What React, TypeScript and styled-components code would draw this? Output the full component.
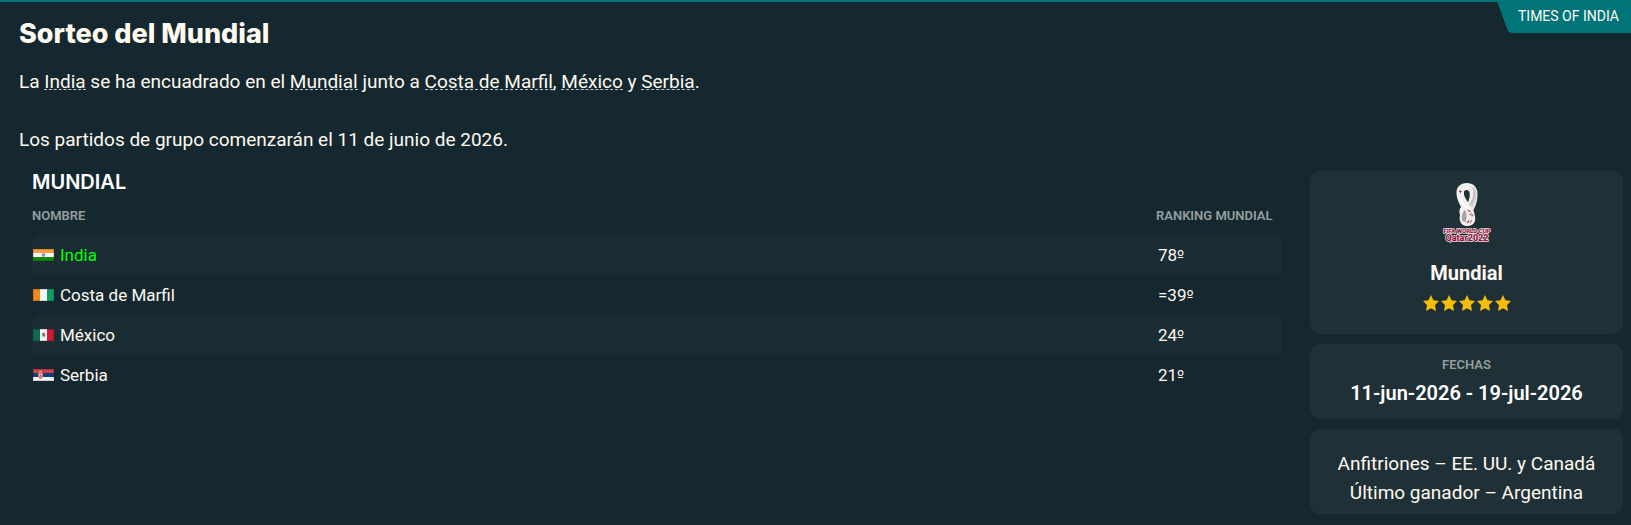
import React from "react";
import styled, { createGlobalStyle } from "styled-components";

const GlobalStyle = createGlobalStyle`
  * { box-sizing: border-box; }
  body {
    margin: 0;
    background: #15282f;
    color: #fff9f0;
    font-family: Roboto, "Liberation Sans", sans-serif;
  }
`;

const Page = styled.main`
  border-top: 2px solid #007478;
  padding-bottom: 10px;
`;

const Header = styled.header`
  display: flex;
  justify-content: space-between;
  align-items: flex-start;
  padding-left: 19px;
`;

const Title = styled.h1`
  margin: 15px 0 0;
  font: 800 27px/34px Inter, sans-serif;
`;

const SourceTag = styled.span`
  position: relative;
  isolation: isolate;
  overflow: hidden;
  padding: 0 12px 3px 22px;
  font-size: 14px;
  line-height: 28px;
  white-space: nowrap;
  &::before {
    content: "";
    position: absolute;
    z-index: -1;
    inset: 0 -20px 0 7px;
    background: #007478;
    border-bottom-left-radius: 4px;
    transform: skewX(20deg);
  }
`;

const Story = styled.section`
  padding: 16px 19px 0;
  font-size: 19px;
  line-height: 29px;
`;

const Paragraph = styled.p`
  margin: 0 0 29px;
  &:last-child { margin-bottom: 0; }
`;

const StoryLink = styled.a`
  color: inherit;
  text-decoration: none;
  border-bottom: 1px dashed #c4c8c5;
  display: inline-block;
  line-height: 15px;
`;

const Columns = styled.div`
  display: grid;
  grid-template-columns: minmax(0, 1fr) 313px;
  gap: 27px;
  padding: 17px 8px 0 32px;
  align-items: start;
`;

const GroupTitle = styled.h2`
  margin: 0;
  font: 600 20px/22px Inter, sans-serif;
  color: #fff;
`;

const GroupTable = styled.table`
  width: 100%;
  border-collapse: separate;
  border-spacing: 0;
  text-align: left;
`;

const HeadCell = styled.th<{ $wide?: boolean }>`
  width: ${(p) => (p.$wide ? "auto" : "127px")};
  height: 42px;
  padding: 4px 0 0;
  color: #959e9f;
  font-size: 13px;
  line-height: 16px;
  font-weight: 600;
  white-space: nowrap;
`;

const Row = styled.tr`
  & > td:first-child { border-radius: 8px 0 0 8px; }
  & > td:last-child { border-radius: 0 8px 8px 0; }
  &:nth-child(odd) > td { background: #1b2d34; }
`;

const Cell = styled.td`
  height: 40px;
  padding: 0 0 0 1px;
  font-size: 17px;
  line-height: 20px;
`;

const RankCell = styled(Cell)`
  padding-left: 2px;
`;

const Ordinal = styled.span`
  font-family: "DejaVu Sans", sans-serif;
  font-size: 15px;
`;

const Team = styled.a<{ $own?: boolean }>`
  display: inline-flex;
  align-items: center;
  gap: 6px;
  color: ${(p) => (p.$own ? "#00ff00" : "inherit")};
  text-decoration: none;
`;

const Sidebar = styled.aside`
  display: flex;
  flex-direction: column;
  gap: 10px;
  text-align: center;
`;

const Card = styled.section`
  display: flex;
  flex-direction: column;
  align-items: center;
  padding: 12px 8px 23px;
  border-radius: 10px;
  background: #1f3037;
`;

const DateCard = styled(Card)`
  padding: 13px 8px 12px;
`;

const NotesCard = styled(Card)`
  padding: 20px 8px 7px;
  font-size: 19px;
  line-height: 29px;
`;

const CardTitle = styled.h3`
  margin: 0;
  font-size: 20px;
  line-height: 28px;
  font-weight: 700;
`;

const DateRange = styled(CardTitle)`
  color: #fff;
  font-weight: 600;
`;

const Caption = styled.div`
  margin-bottom: 6px;
  color: #959e9f;
  font-size: 13px;
  line-height: 16px;
  font-weight: 600;
`;

const Stars = styled.div`
  display: flex;
  gap: 2px;
  margin-top: 8px;
`;

const LogoSvg = styled.svg`
  display: block;
  margin-bottom: 16px;
`;

const NoteLine = styled.p`
  margin: 0;
`;

type Country = "in" | "ci" | "mx" | "rs";

const stripes: Record<Country, { vertical: boolean; colors: string[] }> = {
  in: { vertical: false, colors: ["#ff9f3d", "#f7f7f7", "#138808"] },
  ci: { vertical: true, colors: ["#f58814", "#fafafa", "#109b63"] },
  mx: { vertical: true, colors: ["#106b4c", "#f7f7f7", "#cf1733"] },
  rs: { vertical: false, colors: ["#c8414b", "#12407a", "#f5f5f5"] },
};

function Flag({ country }: { country: Country }) {
  const { vertical, colors } = stripes[country];
  return (
    <svg width="21" height="12" viewBox="0 0 21 12" aria-hidden="true">
      {colors.map((c, i) =>
        vertical ? (
          <rect key={c} x={i * 7} width="7" height="12" fill={c} />
        ) : (
          <rect key={c} y={i * 4} width="21" height="4" fill={c} />
        )
      )}
      {country === "in" && (
        <circle cx="10.5" cy="6" r="1.4" fill="#a5a5dc" stroke="#5555b5" strokeWidth=".6" />
      )}
      {country === "mx" && (
        <>
          <path d="M9 4.6 10.4 3.6 12 4.5 12.2 6.5 11 7.4 9.4 6.6z" fill="#89704f" />
          <path d="M8.8 6.5Q10.5 9.2 12.4 6.5" fill="none" stroke="#819969" strokeWidth=".8" />
        </>
      )}
      {country === "rs" && (
        <>
          <path d="M5 3.3h5v4.2Q9.5 9.5 7.5 10 5.5 9.5 5 7.5z" fill="#cf6570" />
          <path d="M5.5 5.2 7 4.3 7.5 5 8 4.3 9.5 5.2 8.8 8.2 7.5 9 6.2 8.2z" fill="#e3b4b6" />
          <path d="M6.8 6h1.4v1.8H6.8z" fill="#c8414b" />
          <path d="M6 3.1V1.8l.8.5.7-.8.7.8.8-.5v1.3z" fill="#dfb175" />
        </>
      )}
      <rect x=".5" y=".5" width="20" height="11" fill="none" stroke="#000" strokeOpacity=".14" />
    </svg>
  );
}

function WorldCupLogo() {
  return (
    <LogoSvg width="54" height="60" viewBox="0 0 54 60" role="img" aria-label="FIFA World Cup Qatar 2022">
      <path
        fillRule="evenodd"
        d="M27 0C20 0 16 4 16.5 11c.3 5 2.6 9 4.5 13-2 2-1.8 5-1 8-1.3 6 1 10.5 6.8 11 6.2.2 9.2-3.5 8.2-9.5-.3-2-.9-4.5-1.6-6.5C36.5 22 37.7 16 37.5 10 37.2 4 33 0 27 0zM26 7c3 0 4.3 2.2 3.7 6.2-.3 2.1-.8 4.2-1.7 6.1-2-3.2-4.2-6-4.1-9C24 8 24.8 7 26 7z"
        fill="#f2f0ef"
      />
      <path d="M31 3c4 5 3 12-2 18l3 4c3.2-5 4.6-9 4.6-14C36.6 6 34 4 31 3z" fill="#d1cfcf" />
      <path d="M34 7c.7 6-1.2 11-3.8 15" fill="none" stroke="#b9b6b6" strokeWidth="1" />
      <path d="M25 27c2 4 2.2 8 .5 11.5-3 1-4-1.5-3.7-5 .2-3 1.3-5 3.2-6.5z" fill="#a7a3a3" />
      <path d="M21 17c2 7 8 8 12 13" fill="none" stroke="#fff" strokeWidth="2" />
      <path
        d="M18.8 8.5h3M20.3 7v3.4M27.5 26.5l2 2.5M29 27l2 2.2M29 30.5l3 3M31 30l2.2 3M26.5 38l1.5 2 1-3M30 40l2-3"
        fill="none"
        stroke="#bb4a67"
        strokeWidth="1"
      />
      <g
        fill="#8f0f38"
        stroke="#f6e9ec"
        strokeWidth="1.4"
        strokeLinejoin="round"
        paintOrder="stroke"
        fontFamily="Roboto, sans-serif"
        fontWeight="800"
        textAnchor="middle"
      >
        <text x="27" y="50" fontSize="6">FIFA WORLD CUP</text>
        <text x="27" y="58" fontSize="9">Qatar2022</text>
      </g>
    </LogoSvg>
  );
}

function Star() {
  return (
    <svg width="16" height="16" viewBox="0 0 16 16" aria-hidden="true">
      <path
        d="M8 0 10.5 5.2 16 6 12 10.1 13 16 8 13.2 3 16 4 10.1 0 6 5.5 5.2z"
        fill="#f5bd0c"
      />
    </svg>
  );
}

const teams: { country: Country; name: string; rank: string }[] = [
  { country: "in", name: "India", rank: "78" },
  { country: "ci", name: "Costa de Marfil", rank: "=39" },
  { country: "mx", name: "México", rank: "24" },
  { country: "rs", name: "Serbia", rank: "21" },
];

export default function App() {
  return (
    <Page>
      <GlobalStyle />
      <Header>
        <Title>Sorteo del Mundial</Title>
        <SourceTag>TIMES OF INDIA</SourceTag>
      </Header>
      <Story>
        <Paragraph>
          La <StoryLink href="#india">India</StoryLink> se ha encuadrado en el{" "}
          <StoryLink href="#mundial">Mundial</StoryLink> junto a{" "}
          <StoryLink href="#costa-de-marfil">Costa de Marfil</StoryLink>,{" "}
          <StoryLink href="#mexico">México</StoryLink> y{" "}
          <StoryLink href="#serbia">Serbia</StoryLink>.
        </Paragraph>
        <Paragraph>Los partidos de grupo comenzarán el 11 de junio de 2026.</Paragraph>
      </Story>
      <Columns>
        <section>
          <GroupTitle>MUNDIAL</GroupTitle>
          <GroupTable>
            <thead>
              <tr>
                <HeadCell $wide scope="col">NOMBRE</HeadCell>
                <HeadCell scope="col">RANKING MUNDIAL</HeadCell>
              </tr>
            </thead>
            <tbody>
              {teams.map((team) => (
                <Row key={team.country}>
                  <Cell>
                    <Team href={`#${team.country}`} $own={team.country === "in"}>
                      <Flag country={team.country} />
                      {team.name}
                    </Team>
                  </Cell>
                  <RankCell>
                    {team.rank}
                    <Ordinal>º</Ordinal>
                  </RankCell>
                </Row>
              ))}
            </tbody>
          </GroupTable>
        </section>
        <Sidebar>
          <Card>
            <WorldCupLogo />
            <CardTitle>Mundial</CardTitle>
            <Stars role="img" aria-label="5 de 5">
              {[1, 2, 3, 4, 5].map((n) => (
                <Star key={n} />
              ))}
            </Stars>
          </Card>
          <DateCard>
            <Caption>FECHAS</Caption>
            <DateRange>11-jun-2026 - 19-jul-2026</DateRange>
          </DateCard>
          <NotesCard>
            <NoteLine>Anfitriones – EE. UU. y Canadá</NoteLine>
            <NoteLine>Último ganador – Argentina</NoteLine>
          </NotesCard>
        </Sidebar>
      </Columns>
    </Page>
  );
}
